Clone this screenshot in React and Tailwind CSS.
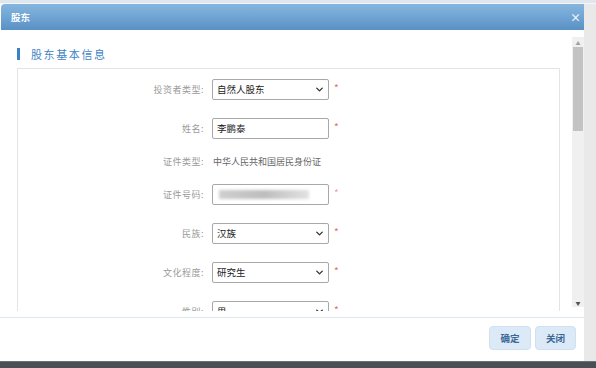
import { ChevronDown } from 'lucide-react';

const font = { fontFamily: '"Noto Sans CJK SC", "Noto Sans", sans-serif' };

function Star({ faded }) {
  return <span className={`ml-[5px] text-[10px] leading-none -mt-[3px] ${faded ? 'text-[#f0a0a0] blur-[0.6px]' : 'text-[#e46a6a]'}`}>*</span>;
}

function Label({ children }) {
  return <div className="w-[194px] pr-[8px] text-right text-[9px] text-[#9a9a9a] tracking-[0.5px]">{children}</div>;
}

function Select({ value }) {
  return (
    <div className="w-[117px] h-[21px] border border-[#a8a8a8] rounded-[2px] bg-white flex items-center justify-between pl-[4px] pr-[3px]">
      <span className="text-[9.5px] text-[#222]">{value}</span>
      <ChevronDown size={11} strokeWidth={3} className="text-[#333]" />
    </div>
  );
}

function Row({ label, children, className = '' }) {
  return (
    <div className={`flex items-center ${className}`}>
      <Label>{label}</Label>
      {children}
    </div>
  );
}

export default function App() {
  return (
    <div className="w-[596px] h-[368px] overflow-hidden bg-[#e9e9e9] flex flex-col" style={font}>
      {/* page behind, top edge */}
      <div className="h-[4px] bg-[#dfe6ee] border-b border-[#f4f7fa] shrink-0" />

      <div className="flex-1 flex min-h-0">
        <div className="w-[584px] flex flex-col bg-white">
          {/* header */}
          <div className="h-[26px] shrink-0 ml-[1px] rounded-tl-[4px] bg-gradient-to-b from-[#86b6dd] via-[#6fa4d3] to-[#5a91c4] flex items-center justify-between pl-[10px] pr-[3px]">
            <span className="text-white text-[9.5px] font-bold">股东</span>
            <span className="text-[#e8f1fa] text-[11px] font-bold leading-none">×</span>
          </div>

          {/* scroll area */}
          <div className="h-[281px] shrink-0 flex overflow-hidden">
            <div className="flex-1 pl-[17px] pr-[12px] pt-[18px]">
              <div className="flex items-center h-[12px]">
                <div className="w-[3px] h-[12px] bg-[#3d82c4]" />
                <span className="ml-[11px] text-[11px] text-[#3f84c4] tracking-[1.6px]">股东基本信息</span>
              </div>
              <div className="mt-[8px] border border-[#e4e4e4] h-[260px] pt-[10px]">
                <Row label="投资者类型:">
                  <Select value="自然人股东" />
                  <Star />
                </Row>
                <Row label="姓名:" className="mt-[18px]">
                  <div className="w-[117px] h-[21px] border border-[#a8a8a8] rounded-[2px] bg-white flex items-center pl-[4px]">
                    <span className="text-[9.5px] text-[#222]">李鹏泰</span>
                  </div>
                  <Star />
                </Row>
                <Row label="证件类型:" className="mt-[12px] h-[21px]">
                  <span className="text-[9px] text-[#666] ml-[1px]">中华人民共和国居民身份证</span>
                </Row>
                <Row label="证件号码:" className="mt-[12px]">
                  <div className="w-[117px] h-[21px] border border-[#a8a8a8] rounded-[2px] bg-white flex items-center pl-[6px]">
                    <div className="w-[90px] h-[9px] bg-gradient-to-r from-[#cfcfcf] via-[#bdbdbd] to-[#e2e2e2] blur-[1.5px]" />
                  </div>
                  <Star faded />
                </Row>
                <Row label="民族:" className="mt-[18px]">
                  <Select value="汉族" />
                  <Star />
                </Row>
                <Row label="文化程度:" className="mt-[18px]">
                  <Select value="研究生" />
                  <Star />
                </Row>
                <Row label="性别:" className="mt-[18px]">
                  <Select value="男" />
                  <Star />
                </Row>
              </div>
            </div>
            {/* scrollbar */}
            <div className="w-[12px] mt-[7px] h-[270px] bg-[#f0f0f0] flex flex-col items-center">
              <div className="h-[10px] flex items-center text-[#a0a0a0] text-[5px] leading-none">▲</div>
              <div className="w-[10px] h-[84px] bg-[#c3c3c3]" />
              <div className="flex-1" />
              <div className="h-[10px] flex items-center text-[#505050] text-[5px] leading-none">▼</div>
            </div>
          </div>

          {/* footer */}
          <div className="mt-[6px] border-t border-[#dde5ee]" />
          <div className="flex-1 flex justify-end items-start pt-[8px] pr-[8px] gap-[4px]">
            <button className="w-[42px] h-[24px] rounded-[4px] bg-[#dce9f6] border border-[#cfe0f1] text-[9.5px] font-bold text-[#3a6896]">确定</button>
            <button className="w-[41px] h-[24px] rounded-[4px] bg-[#dce9f6] border border-[#cfe0f1] text-[9.5px] font-bold text-[#3a6896]">关闭</button>
          </div>
        </div>
        <div className="flex-1" />
      </div>

      {/* page behind, bottom edge */}
      <div className="h-[7px] shrink-0 bg-[#4a4f56] border-t border-[#6b7077]" />
    </div>
  );
}
